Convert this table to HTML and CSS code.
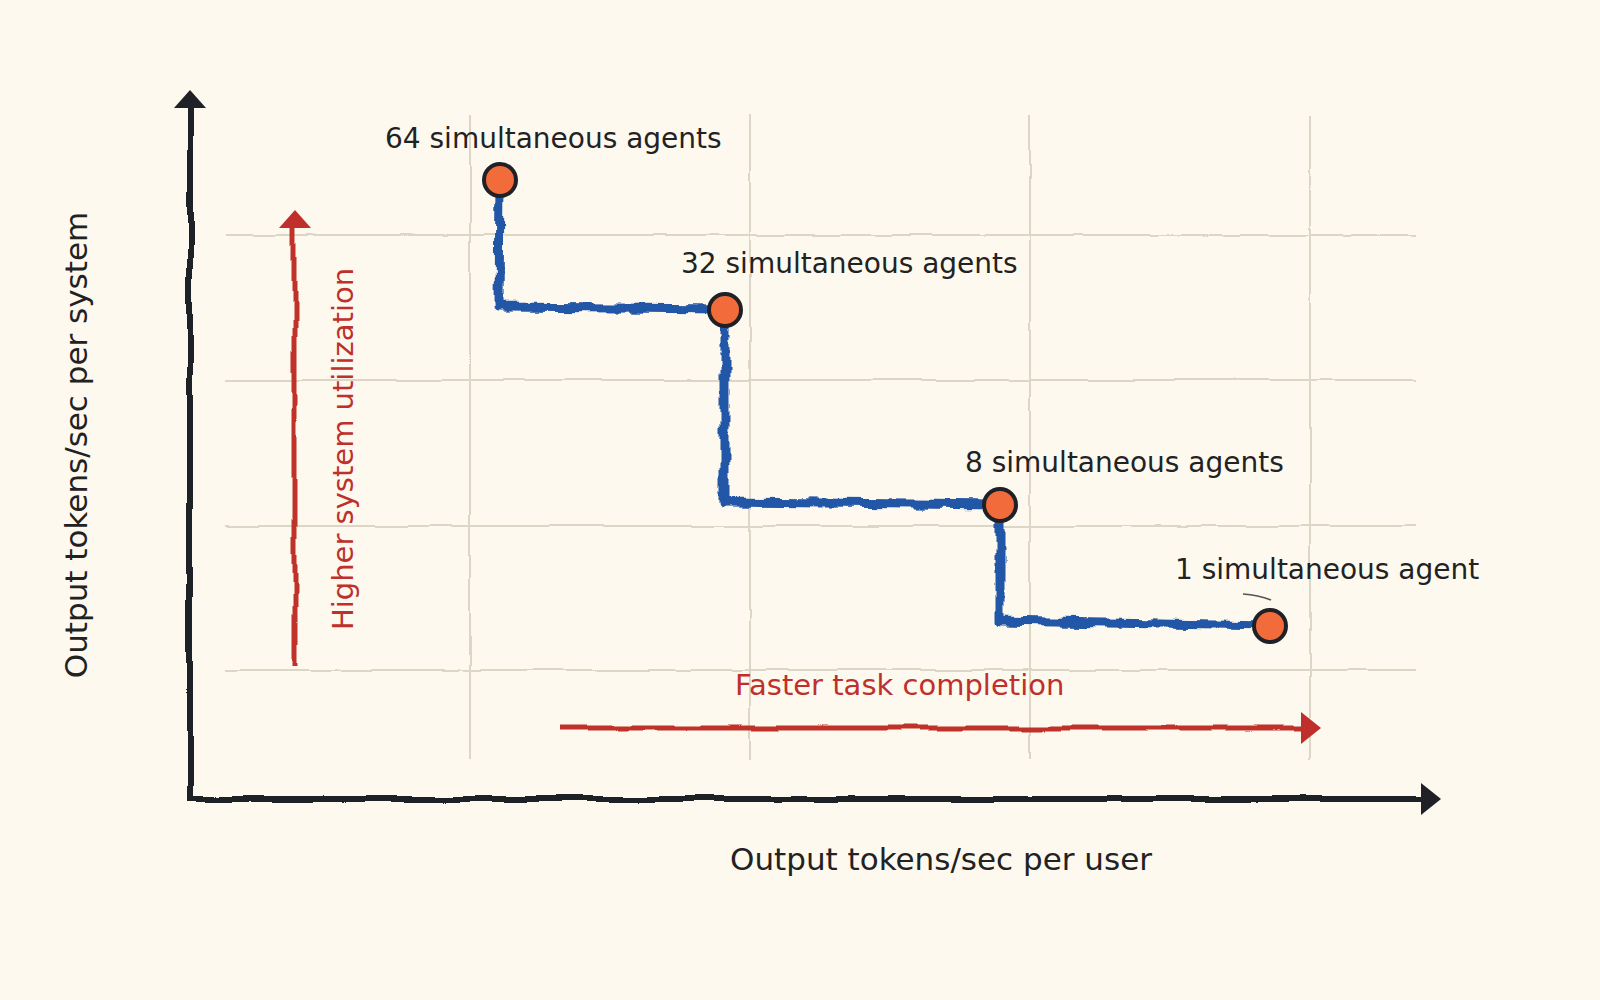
FILE: index.html
```html
<!DOCTYPE html>
<html lang="en">
<head>
<meta charset="utf-8">
<title>Output tokens/sec per user vs per system</title>
<link rel="stylesheet" href="styles.css">
</head>
<body>
<main class="page">
  <svg class="chart" width="1600" height="1000" viewBox="0 0 1600 1000" xmlns="http://www.w3.org/2000/svg">
    <defs>
      <filter id="rough-soft" filterUnits="userSpaceOnUse" x="0" y="0" width="1600" height="1000">
        <feTurbulence type="fractalNoise" baseFrequency="0.015" numOctaves="2" seed="4" result="n"/>
        <feDisplacementMap in="SourceGraphic" in2="n" scale="8" xChannelSelector="R" yChannelSelector="G"/>
      </filter>
      <filter id="rough-grid" filterUnits="userSpaceOnUse" x="0" y="0" width="1600" height="1000">
        <feTurbulence type="fractalNoise" baseFrequency="0.02" numOctaves="2" seed="9" result="n"/>
        <feDisplacementMap in="SourceGraphic" in2="n" scale="4" xChannelSelector="R" yChannelSelector="G"/>
      </filter>
      <filter id="rough-blue" filterUnits="userSpaceOnUse" x="0" y="0" width="1600" height="1000">
        <feTurbulence type="fractalNoise" baseFrequency="0.045" numOctaves="3" seed="2" result="n"/>
        <feDisplacementMap in="SourceGraphic" in2="n" scale="10" xChannelSelector="R" yChannelSelector="G"/>
      </filter>
    </defs>

    <!-- grid -->
    <g class="grid" filter="url(#rough-grid)">
      <path d="M470,115 L470,760 M750,115 L750,760 M1030,115 L1030,760 M1310,115 L1310,760"/>
      <path d="M225,235 L1416,235 M225,380 L1416,380 M225,526 L1416,526 M225,670 L1416,670"/>
    </g>

    <!-- axes -->
    <g filter="url(#rough-soft)">
      <path class="axis" d="M190,801 L190,104"/>
      <path class="axis" d="M187,799 L1424,799"/>
    </g>
    <polygon class="axis-head" points="190,90 206,108 174,108"/>
    <polygon class="axis-head" points="1441,799 1421,783 1421,815"/>

    <!-- annotation arrows -->
    <g filter="url(#rough-soft)">
      <path class="red-line" d="M295,665 L295,224"/>
      <path class="red-line" d="M560,728 L1304,728"/>
    </g>
    <polygon class="red-head" points="295,210 311,228 279,228"/>
    <polygon class="red-head" points="1321,728 1301,712 1301,744"/>

    <!-- step curve -->
    <path class="curve" filter="url(#rough-blue)" d="M500,182 L499,307 L725,309 L725,502 L1000,505 L1000,621 L1270,626"/>

    <!-- small pointer -->
    <path class="pointer" d="M1243,594 Q1258,595 1271,600"/>

    <!-- points -->
    <circle class="dot" cx="500" cy="180" r="16"/>
    <circle class="dot" cx="725" cy="310" r="16"/>
    <circle class="dot" cx="1000" cy="505" r="16"/>
    <circle class="dot" cx="1270" cy="626" r="16"/>

    <!-- point labels -->
    <text class="label" x="385" y="148">64 simultaneous agents</text>
    <text class="label" x="681" y="273">32 simultaneous agents</text>
    <text class="label" x="965" y="472">8 simultaneous agents</text>
    <text class="label" x="1175" y="579">1 simultaneous agent</text>

    <!-- annotation labels -->
    <text class="note" transform="translate(353,449) rotate(-90)" text-anchor="middle">Higher system utilization</text>
    <text class="note" x="735" y="695">Faster task completion</text>

    <!-- axis titles -->
    <text class="axis-title" transform="translate(87,445) rotate(-90)" text-anchor="middle">Output tokens/sec per system</text>
    <text class="axis-title" x="941" y="870" text-anchor="middle">Output tokens/sec per user</text>
  </svg>
</main>
</body>
</html>
```

FILE: styles.css
```css
html, body {
  margin: 0;
  padding: 0;
  background: #fdf9ef;
}

.page {
  width: 1600px;
  height: 1000px;
  overflow: hidden;
}

.chart {
  display: block;
}

.grid path {
  fill: none;
  stroke: #ddd6c6;
  stroke-width: 2;
}

.axis {
  fill: none;
  stroke: #1f2126;
  stroke-width: 6;
  stroke-linecap: butt;
}

.axis-head {
  fill: #1f2126;
}

.red-line {
  fill: none;
  stroke: #bf302c;
  stroke-width: 5;
}

.red-head {
  fill: #bf302c;
}

.curve {
  fill: none;
  stroke: #2456a6;
  stroke-width: 9;
  stroke-linejoin: round;
  stroke-linecap: round;
}

.pointer {
  fill: none;
  stroke: #555555;
  stroke-width: 1.6;
}

.dot {
  fill: #f26b3a;
  stroke: #1f2126;
  stroke-width: 4;
}

.label {
  font-family: "DejaVu Sans", Verdana, sans-serif;
  font-size: 28px;
  fill: #222222;
}

.note {
  font-family: "DejaVu Sans", Verdana, sans-serif;
  font-size: 29px;
  fill: #bf302c;
}

.axis-title {
  font-family: "DejaVu Sans", Verdana, sans-serif;
  font-size: 31px;
  fill: #222222;
}
```
